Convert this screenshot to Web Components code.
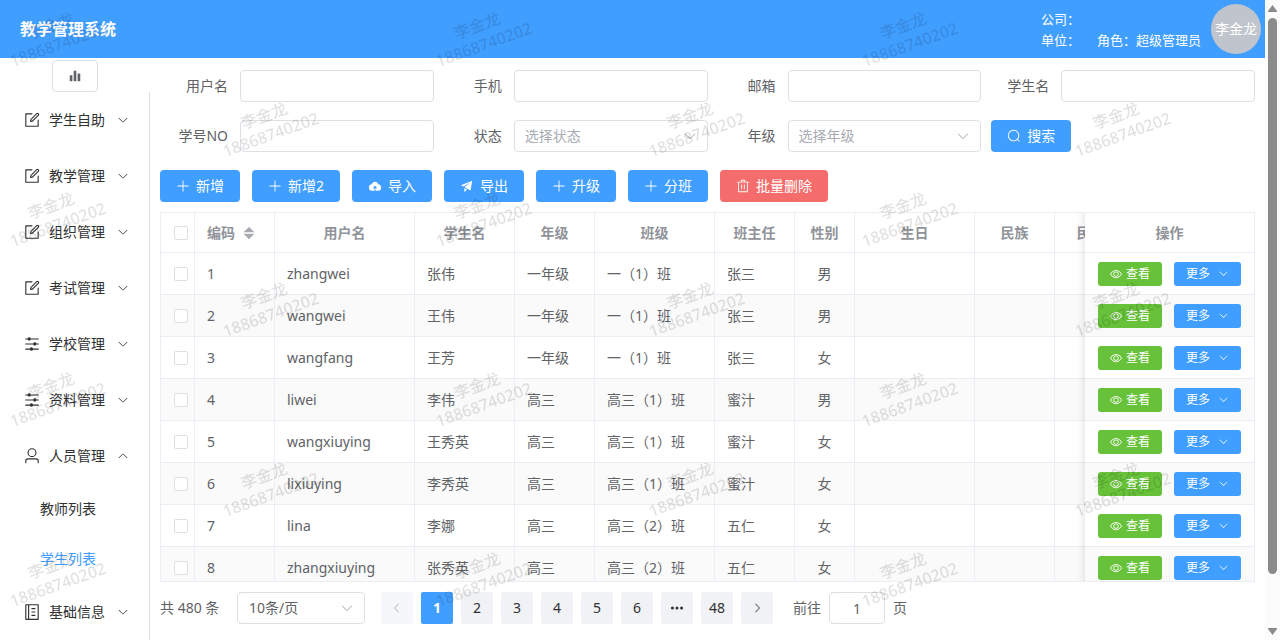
<!DOCTYPE html>
<html lang="zh-CN">
<head>
<meta charset="utf-8">
<title>教学管理系统</title>
<style>
  html, body { margin: 0; height: 100%; }
  body {
    font-family: "Noto Sans", "Noto Sans CJK SC", sans-serif;
    font-size: 14px;
    line-height: 20px;
    color: #606266;
    background: #fff;
    overflow: hidden;
    --primary: #409eff;
    --line: #dcdfe6;
    --table-line: #ebeef5;
    --muted: #a8abb2;
  }
</style>
</head>
<body>
<school-app></school-app>

<script>
const ICONS = {
  edit: '<path d="M832 512a32 32 0 1 1 64 0v352a32 32 0 0 1-32 32H160a32 32 0 0 1-32-32V160a32 32 0 0 1 32-32h352a32 32 0 0 1 0 64H192v640h640z"/><path d="m469.952 554.24 52.8-7.552L847.104 222.4a32 32 0 1 0-45.248-45.248L477.44 501.44l-7.552 52.8zm422.4-422.4a96 96 0 0 1 0 135.808l-331.84 331.84a32 32 0 0 1-18.112 9.088L436.8 623.68a32 32 0 0 1-36.224-36.224l15.104-105.6a32 32 0 0 1 9.024-18.112l331.904-331.84a96 96 0 0 1 135.744 0z"/>',
  down: '<path d="M831.872 340.864 512 652.672 192.128 340.864a30.592 30.592 0 0 0-42.752 0 29.12 29.12 0 0 0 0 41.6L489.664 714.24a32 32 0 0 0 44.672 0l340.288-331.712a29.12 29.12 0 0 0 0-41.728 30.592 30.592 0 0 0-42.752 0z"/>',
  up: '<path transform="matrix(1 0 0 -1 0 1024)" d="M831.872 340.864 512 652.672 192.128 340.864a30.592 30.592 0 0 0-42.752 0 29.12 29.12 0 0 0 0 41.6L489.664 714.24a32 32 0 0 0 44.672 0l340.288-331.712a29.12 29.12 0 0 0 0-41.728 30.592 30.592 0 0 0-42.752 0z"/>',
  left: '<path d="M609.408 149.376 277.76 489.6a32 32 0 0 0 0 44.672l331.648 340.352a29.12 29.12 0 0 0 41.728 0 30.592 30.592 0 0 0 0-42.752L339.264 511.936l311.872-319.872a30.592 30.592 0 0 0 0-42.688 29.12 29.12 0 0 0-41.728 0z"/>',
  right: '<path transform="matrix(-1 0 0 1 1024 0)" d="M609.408 149.376 277.76 489.6a32 32 0 0 0 0 44.672l331.648 340.352a29.12 29.12 0 0 0 41.728 0 30.592 30.592 0 0 0 0-42.752L339.264 511.936l311.872-319.872a30.592 30.592 0 0 0 0-42.688 29.12 29.12 0 0 0-41.728 0z"/>',
  plus: '<path d="M480 480V128a32 32 0 0 1 64 0v352h352a32 32 0 1 1 0 64H544v352a32 32 0 1 1-64 0V544H128a32 32 0 0 1 0-64z"/>',
  search: '<path d="m795.904 750.72 124.992 124.928a32 32 0 0 1-45.248 45.248L750.656 795.904a416 416 0 1 1 45.248-45.248zM480 832a352 352 0 1 0 0-704 352 352 0 0 0 0 704z"/>',
  trash: '<path d="M160 256H96a32 32 0 0 1 0-64h256V95.936a32 32 0 0 1 32-32h256a32 32 0 0 1 32 32V192h256a32 32 0 1 1 0 64h-64v672a32 32 0 0 1-32 32H192a32 32 0 0 1-32-32zm448-64v-64H416v64zM224 896h576V256H224zm192-128a32 32 0 0 1-32-32V416a32 32 0 0 1 64 0v320a32 32 0 0 1-32 32zm192 0a32 32 0 0 1-32-32V416a32 32 0 0 1 64 0v320a32 32 0 0 1-32 32z"/>',
  view: '<path d="M512 160c320 0 512 352 512 352S832 864 512 864 0 512 0 512s192-352 512-352zm0 64c-225.28 0-384.128 208.064-436.8 288 52.608 79.872 211.456 288 436.8 288 225.28 0 384.128-208.064 436.8-288-52.608-79.872-211.456-288-436.8-288zm0 64a224 224 0 1 1 0 448 224 224 0 0 1 0-448zm0 64a160.192 160.192 0 0 0-160 160c0 88.192 71.744 160 160 160s160-71.808 160-160-71.744-160-160-160z"/>',
  user: '<path d="M512 512a192 192 0 1 0 0-384 192 192 0 0 0 0 384zm0 64a256 256 0 1 1 0-512 256 256 0 0 1 0 512zm320 320v-96a96 96 0 0 0-96-96H288a96 96 0 0 0-96 96v96a32 32 0 1 1-64 0v-96a160 160 0 0 1 160-160h448a160 160 0 0 1 160 160v96a32 32 0 1 1-64 0z"/>',
  send: '<path d="m64 448 832-320-128 704-446.08-243.328L832 192 242.816 545.472 64 448zm256 512V657.024L512 768 320 960z"/>',
  bars: '<path d="M416 896V128h192v768zm-288 0V448h192v448zm576 0V320h192v576z"/>',
  sliders: '<path d="M389.44 768a96.064 96.064 0 0 1 181.12 0H896v64H570.56a96.064 96.064 0 0 1-181.12 0H128v-64zm192-288a96.064 96.064 0 0 1 181.12 0H896v64H762.56a96.064 96.064 0 0 1-181.12 0H128v-64zm-320-288a96.064 96.064 0 0 1 181.12 0H896v64H442.56a96.064 96.064 0 0 1-181.12 0H128v-64z"/>',
  memo: '<path fill-rule="evenodd" d="M160 64h704a32 32 0 0 1 32 32v832a32 32 0 0 1-32 32H160a32 32 0 0 1-32-32V96a32 32 0 0 1 32-32zm32 64v768h96V128zm160 0v768h480V128z"/><path d="M480 288h224v64H480zm0 192h224v64H480zm0 192h224v64H480z"/>',
  upload: '<path d="M544 864V672h128L512 480 352 672h128v192H320v-1.6c-5.376.32-10.496 1.6-16 1.6A240 240 0 0 1 64 624c0-123.136 93.12-223.488 212.608-237.248A239.808 239.808 0 0 1 512 192a239.872 239.872 0 0 1 235.456 194.752c119.488 13.76 212.48 114.112 212.48 237.248a240 240 0 0 1-240 240c-5.376 0-10.56-1.28-16-1.6v1.6z"/>',
  more: '<circle cx="176" cy="512" r="112"/><circle cx="512" cy="512" r="112"/><circle cx="848" cy="512" r="112"/>',
  sort: '<path d="M512 64 110 464h804zM512 960 110 560h804z"/>'
};

class Base extends HTMLElement {
  connectedCallback() {
    if (this.shadowRoot) return;
    this.attachShadow({ mode: 'open' }).innerHTML =
      `<style>*{box-sizing:border-box}${this.css()}</style>${this.html()}`;
  }
  attr(name, fallback = '') { return this.getAttribute(name) ?? fallback; }
}

customElements.define('ui-icon', class extends Base {
  css() {
    const s = this.attr('size', '14');
    return `:host{display:inline-flex;flex:none;width:${s}px;height:${s}px}svg{display:block;width:100%;height:100%;fill:currentColor}`;
  }
  html() { return `<svg viewBox="0 0 1024 1024" aria-hidden="true">${ICONS[this.attr('name')]}</svg>`; }
});

customElements.define('ui-button', class extends Base {
  css() {
    return `:host{display:block;flex:none}
    button{display:flex;align-items:center;justify-content:center;gap:6px;height:32px;padding:0 16px;border:0;border-radius:4px;
      font:14px/20px "Noto Sans","Noto Sans CJK SC",sans-serif;color:#fff;background:var(--primary);cursor:pointer;white-space:nowrap}
    :host([tone=danger]) button{background:#f56c6c}
    :host([tone=success]) button{background:#67c23a}
    :host([size=small]) button{height:24px;padding:0 12px;border-radius:3px;font-size:12px;gap:4px}
    :host([size=small][trail]) button{gap:8px}`;
  }
  html() {
    const size = this.attr('size') === 'small' ? 12 : 14;
    const lead = this.hasAttribute('icon') ? `<ui-icon name="${this.attr('icon')}" size="${size}"></ui-icon>` : '';
    const trail = this.hasAttribute('trail') ? `<ui-icon name="${this.attr('trail')}" size="${size - 1}"></ui-icon>` : '';
    return `<button type="button">${lead}<slot></slot>${trail}</button>`;
  }
});

customElements.define('form-field', class extends Base {
  css() {
    return `:host{display:flex;align-items:center;height:32px;min-width:0}
    label{flex:none;width:80px;padding-right:12px;text-align:right;line-height:32px}
    .box{position:relative;flex:1;min-width:0}
    input,select{display:block;width:100%;height:32px;padding:0 11px;border:1px solid var(--line);border-radius:4px;background:#fff;
      font:14px/20px "Noto Sans","Noto Sans CJK SC",sans-serif;color:#606266;appearance:none;outline:0}
    select{color:var(--muted);padding:0 10px}
    ui-icon{position:absolute;right:11px;top:9px;color:var(--muted);pointer-events:none}`;
  }
  html() {
    const hint = this.attr('select');
    const control = hint
      ? `<select id="c"><option>${hint}</option></select><ui-icon name="down"></ui-icon>`
      : `<input id="c" type="text">`;
    return `<label for="c">${this.attr('label')}</label><div class="box">${control}</div>`;
  }
});

customElements.define('search-form', class extends Base {
  css() {
    return `:host{display:block}
    form{display:grid;grid-template-columns:repeat(4,minmax(0,1fr));row-gap:18px}
    ui-button{padding-left:10px}`;
  }
  html() {
    return `<form>
      <form-field label="用户名"></form-field><form-field label="手机"></form-field>
      <form-field label="邮箱"></form-field><form-field label="学生名"></form-field>
      <form-field label="学号NO"></form-field><form-field label="状态" select="选择状态"></form-field>
      <form-field label="年级" select="选择年级"></form-field>
      <div style="display:flex"><ui-button icon="search">搜索</ui-button></div></form>`;
  }
});

customElements.define('action-bar', class extends Base {
  css() { return `:host{display:flex;gap:12px}`; }
  html() {
    return `<ui-button icon="plus">新增</ui-button><ui-button icon="plus">新增2</ui-button>
      <ui-button icon="upload">导入</ui-button><ui-button icon="send">导出</ui-button>
      <ui-button icon="plus">升级</ui-button><ui-button icon="plus">分班</ui-button>
      <ui-button icon="trash" tone="danger">批量删除</ui-button>`;
  }
});

customElements.define('app-header', class extends Base {
  css() {
    return `:host{display:flex;align-items:center;height:58px;padding:0 4px 0 20px;background:var(--primary);color:#fff}
    h1{flex:1;margin:0;font-size:16px;line-height:24px}
    .info{display:grid;grid-template-columns:auto auto;column-gap:17px;padding:2px 10px 0 0;font-size:13px;line-height:21px}
    .avatar{display:flex;align-items:center;justify-content:center;width:50px;height:50px;border-radius:50%;background:#c0c4cc;white-space:nowrap}`;
  }
  html() {
    return `<h1>教学管理系统</h1>
      <div class="info"><span>公司：</span><span></span><span>单位：</span><span>角色：超级管理员</span></div>
      <div class="avatar">李金龙</div>`;
  }
});

customElements.define('menu-item', class extends Base {
  css() {
    return `:host{display:block}
    a{display:flex;align-items:center;height:56px;padding:0 20px;color:#303133;text-decoration:none;white-space:nowrap}
    .ic{display:flex;justify-content:center;width:24px;margin-right:5px}
    .tx{flex:1}
    :host([sub]) a{height:50px;padding-left:40px}
    :host([active]) a{color:var(--primary)}`;
  }
  html() {
    if (this.hasAttribute('sub')) return `<a href="#"><slot></slot></a>`;
    return `<a href="#"><span class="ic"><ui-icon name="${this.attr('icon')}" size="18"></ui-icon></span>
      <span class="tx"><slot></slot></span><ui-icon name="${this.hasAttribute('open') ? 'up' : 'down'}" size="12"></ui-icon></a>`;
  }
});

customElements.define('side-menu', class extends Base {
  css() {
    return `:host{display:flex;flex-direction:column;min-height:0}
    button{flex:none;align-self:center;display:flex;align-items:center;justify-content:center;width:46px;height:32px;margin-top:2px;padding:0;
      border:1px solid var(--line);border-radius:4px;background:#fff;color:#606266}
    nav{flex:1;border-right:1px solid var(--line)}`;
  }
  html() {
    return `<button type="button" aria-label="折叠菜单"><ui-icon name="bars"></ui-icon></button>
    <nav>
      <menu-item icon="edit">学生自助</menu-item><menu-item icon="edit">教学管理</menu-item>
      <menu-item icon="edit">组织管理</menu-item><menu-item icon="edit">考试管理</menu-item>
      <menu-item icon="sliders">学校管理</menu-item><menu-item icon="sliders">资料管理</menu-item>
      <menu-item icon="user" open>人员管理</menu-item>
      <menu-item sub>教师列表</menu-item><menu-item sub active>学生列表</menu-item>
      <menu-item icon="memo">基础信息</menu-item>
    </nav>`;
  }
});

const STUDENTS = [
  ['1', 'zhangwei', '张伟', '一年级', '一（1）班', '张三', '男'],
  ['2', 'wangwei', '王伟', '一年级', '一（1）班', '张三', '男'],
  ['3', 'wangfang', '王芳', '一年级', '一（1）班', '张三', '女'],
  ['4', 'liwei', '李伟', '高三', '高三（1）班', '蜜汁', '男'],
  ['5', 'wangxiuying', '王秀英', '高三', '高三（1）班', '蜜汁', '女'],
  ['6', 'lixiuying', '李秀英', '高三', '高三（1）班', '蜜汁', '女'],
  ['7', 'lina', '李娜', '高三', '高三（2）班', '五仁', '女'],
  ['8', 'zhangxiuying', '张秀英', '高三', '高三（2）班', '五仁', '女']
];

customElements.define('student-table', class extends Base {
  css() {
    return `:host{display:block;overflow:hidden;border:1px solid var(--table-line)}
    table{table-layout:fixed;width:100%;min-width:1121px;border-collapse:separate;border-spacing:0}
    th,td{height:42px;padding:0 12px;border-right:1px solid var(--table-line);border-bottom:1px solid var(--table-line);
      text-align:left;background:#fff;white-space:nowrap;overflow:hidden}
    th{height:40px;color:#909399;text-align:center}
    tbody tr:nth-child(even) td{background:#fafafa}
    th:first-child,td:first-child{padding:0}
    td:nth-child(8){text-align:center}
    .sort{display:flex;align-items:center;gap:7px}
    .sort ui-icon{color:var(--muted)}
    input{appearance:none;display:block;width:14px;height:14px;margin:0 auto 0 13px;border:1px solid var(--line);border-radius:2px;background:#fff}
    th:last-child,td:last-child{position:sticky;right:0;overflow:visible;border-right:0}
    th:last-child::before,td:last-child::before{content:"";position:absolute;top:0;bottom:-1px;left:-10px;width:10px;
      box-shadow:inset -10px 0 10px -10px rgba(0,0,0,.15)}
    td:last-child{padding-left:13px}
    .ops{display:flex;align-items:center;gap:12px}`;
  }
  html() {
    const widths = [34, 80, 140, 100, 80, 120, 80, 60, 120, 80, 58, 169];
    const heads = ['用户名', '学生名', '年级', '班级', '班主任', '性别', '生日', '民族', '民', '操作'];
    return `<table><colgroup>${widths.map(w => `<col style="width:${w}px">`).join('')}</colgroup>
    <thead><tr><th><input type="checkbox" aria-label="全选"></th>
      <th><span class="sort">编码<ui-icon name="sort" size="14"></ui-icon></span></th>${heads.map(h => `<th>${h}</th>`).join('')}</tr></thead>
    <tbody>${STUDENTS.map(r => `<tr><td><input type="checkbox" aria-label="选择 ${r[0]}"></td>${r.map(c => `<td>${c}</td>`).join('')}
      <td></td><td></td><td></td><td><div class="ops"><ui-button size="small" tone="success" icon="view">查看</ui-button><ui-button size="small" trail="down">更多</ui-button></div></td></tr>`).join('')}</tbody></table>`;
  }
});

customElements.define('page-bar', class extends Base {
  css() {
    return `:host{display:flex;align-items:center;gap:16px;height:32px}
    select,input,button{font:14px/20px "Noto Sans","Noto Sans CJK SC",sans-serif;height:32px;padding:0;outline:0}
    .total{min-width:61px}
    .size{position:relative;width:128px}
    select,input{display:block;width:100%;border:1px solid var(--line);border-radius:4px;background:#fff;color:#606266;appearance:none}
    select{padding:0 11px}
    .size ui-icon{position:absolute;right:11px;top:9px;color:var(--muted)}
    .pages{display:flex;gap:8px}
    button{display:flex;align-items:center;justify-content:center;width:32px;border:0;border-radius:2px;background:#f0f2f5;color:#303133}
    button:disabled{background:#f5f7fa;color:var(--muted)}
    button[aria-current]{background:var(--primary);color:#fff;font-weight:700}
    .jump{display:flex;align-items:center;gap:8px;padding-left:4px}
    .jump input{width:56px;text-align:center;appearance:textfield}
    input::-webkit-inner-spin-button{appearance:none;margin:0}`;
  }
  html() {
    return `<span class="total">共 480 条</span>
    <div class="size"><select aria-label="每页条数"><option>10条/页</option></select><ui-icon name="down"></ui-icon></div>
    <div class="pages"><button type="button" disabled aria-label="上一页"><ui-icon name="left" size="12"></ui-icon></button>
      <button type="button" aria-current="page">1</button>${[2, 3, 4, 5, 6].map(n => `<button type="button">${n}</button>`).join('')}
      <button type="button" aria-label="更多页"><ui-icon name="more"></ui-icon></button><button type="button">48</button>
      <button type="button" aria-label="下一页"><ui-icon name="right" size="12"></ui-icon></button></div>
    <div class="jump"><label for="j">前往</label><input id="j" type="number" value="1"><span>页</span></div>`;
  }
});

customElements.define('scroll-rail', class extends Base {
  css() {
    return `:host{display:flex;flex-direction:column;align-items:center;justify-content:space-between;padding:4px 0;background:#fcfcfc}
    svg{display:block;width:9px;height:9px;fill:#8b8b8b}
    .track{flex:1;width:9px;margin:5px 0}
    .thumb{height:92%;border-radius:5px;background:#8b8b8b}`;
  }
  html() {
    return `<svg viewBox="0 0 9 9" aria-hidden="true"><path d="M4.500 1 9 7v1H0V7z"/></svg>
      <div class="track"><div class="thumb"></div></div>
      <svg viewBox="0 0 9 9" aria-hidden="true"><path d="M4.500 8 9 2V1H0v1z"/></svg>`;
  }
});

/* Diagonal user watermark: staggered rows repeated across the window. */
customElements.define('user-watermark', class extends Base {
  css() {
    return `:host{position:fixed;inset:0;overflow:hidden;pointer-events:none;z-index:10}
    .rows{margin-top:-10px}
    .row{display:flex;width:max-content;margin-left:-159px}
    .row:nth-child(even){margin-left:54px}
    .cell{display:flex;align-items:center;justify-content:center;width:426px;height:90px}
    .mark{transform:rotate(-20deg);text-align:center;font-size:16px;font-weight:500;line-height:20px;color:rgba(0,0,0,.12)}`;
  }
  html() {
    const cell = '<div class="cell"><div class="mark">李金龙<br>18868740202</div></div>';
    return `<div class="rows" aria-hidden="true">${`<div class="row">${cell.repeat(3)}</div>`.repeat(7)}</div>`;
  }
});

customElements.define('school-app', class extends Base {
  css() {
    return `:host{display:grid;grid-template-columns:minmax(0,1fr) 15px;height:100vh}
    .page{display:flex;flex-direction:column;min-height:0}
    .body{flex:1;display:grid;grid-template-columns:150px minmax(0,1fr);min-height:0}
    main{display:flex;flex-direction:column;min-width:0;min-height:0;padding:12px 10px 16px}
    action-bar{margin:18px 0 10px}
    student-table{flex:1;min-height:0}
    page-bar{margin-top:10px}`;
  }
  html() {
    return `<div class="page"><app-header></app-header><div class="body"><side-menu></side-menu>
      <main><search-form></search-form><action-bar></action-bar><student-table></student-table><page-bar></page-bar></main></div></div>
      <scroll-rail></scroll-rail><user-watermark></user-watermark>`;
  }
});
</script>
</body>
</html>
